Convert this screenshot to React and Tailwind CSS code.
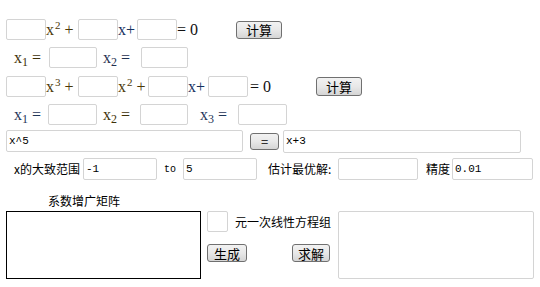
import React from 'react';

const serif = { fontFamily: '"Liberation Serif", "DejaVu Serif", serif' };

function Box({ w = 40, h = 21, value = '', className = '' }) {
  return (
    <input
      readOnly
      value={value}
      className={`shrink-0 rounded-[2px] border border-[#d4d4d4] bg-white px-[2px] text-[11px] text-black outline-none font-['Liberation_Mono',monospace] ${className}`}
      style={{ width: w, height: h }}
    />
  );
}

function Btn({ children, w = 46, h = 18, className = '' }) {
  return (
    <button
      className={`shrink-0 rounded-[3px] border border-[#707070] bg-gradient-to-b from-[#f2f2f2] via-[#e8e8e8] to-[#d5d5d5] text-[13px] leading-none text-black font-['Noto_Sans_CJK_SC',sans-serif] ${className}`}
      style={{ width: w, height: h }}
    >
      {children}
    </button>
  );
}

function Term({ children, w, color = 'text-[#111]' }) {
  return (
    <span className={`shrink-0 text-[16px] leading-none ${color}`} style={{ ...serif, width: w }}>
      {children}
    </span>
  );
}

export default function App() {
  return (
    <div className="w-[540px] h-[287px] bg-white text-black overflow-hidden">
      {/* quadratic */}
      <div className="flex items-center h-[21px] mt-[19px] pl-[6px]">
        <Box />
        <Term w={32} color="text-[#4a3706]">
          x<sup className="text-[11px] ml-[1px]">2</sup> +
        </Term>
        <Box />
        <Term w={19} color="text-[#15305e]">x+</Term>
        <Box />
        <Term w={59}>= 0</Term>
        <Btn>计算</Btn>
      </div>
      <div className="flex items-center h-[21px] mt-[7px] pl-[14px]">
        <Term w={35} color="text-[#3e3108]">
          x<sub className="text-[12px]">1</sub> =
        </Term>
        <Box w={48} />
        <Term w={44} color="text-[#1f3050]">
          <span className="ml-[6px]">x<sub className="text-[12px]">2</sub> =</span>
        </Term>
        <Box w={47} />
      </div>

      {/* cubic */}
      <div className="flex items-center h-[21px] mt-[8px] pl-[6px]">
        <Box />
        <Term w={32} color="text-[#4a3706]">
          x<sup className="text-[11px] ml-[1px]">3</sup> +
        </Term>
        <Box />
        <Term w={30} color="text-[#4a3706]">
          x<sup className="text-[11px] ml-[1px]">2</sup> +
        </Term>
        <Box />
        <Term w={20} color="text-[#15305e]">x+</Term>
        <Box />
        <Term w={68}>
          <span className="ml-[2px]">= 0</span>
        </Term>
        <Btn h={19}>计算</Btn>
      </div>
      <div className="flex items-center h-[21px] mt-[7px] pl-[14px]">
        <Term w={34} color="text-[#1f3558]">
          x<sub className="text-[12px]">1</sub> =
        </Term>
        <Box w={49} />
        <Term w={43} color="text-[#3e3108]">
          <span className="ml-[6px]">x<sub className="text-[12px]">2</sub> =</span>
        </Term>
        <Box w={48} />
        <Term w={50} color="text-[#1f3558]">
          <span className="ml-[12px]">x<sub className="text-[12px]">3</sub> =</span>
        </Term>
        <Box w={49} />
      </div>

      {/* equation solver */}
      <div className="flex items-center h-[22px] mt-[5px] pl-[6px]">
        <Box w={237} h={22} value="x^5" />
        <Btn w={29} h={17} className="ml-[7px]">=</Btn>
        <Box w={238} h={23} value="x+3" className="ml-[4px]" />
      </div>
      <div className="flex items-center h-[22px] mt-[6px] pl-[14px] text-[12px] font-['Noto_Sans_CJK_SC',sans-serif]">
        <span className="w-[69px] shrink-0">x的大致范围</span>
        <Box w={74} h={22} value="-1" />
        <span className="w-[26px] shrink-0 text-center text-[10px] font-['Liberation_Mono',monospace]">to</span>
        <Box w={74} h={22} value="5" />
        <span className="w-[81px] shrink-0 pl-[11px]">估计最优解:</span>
        <Box w={80} h={22} />
        <span className="w-[34px] shrink-0 pl-[8px]">精度</span>
        <Box w={81} h={22} value="0.01" />
      </div>

      {/* linear system */}
      <div className="flex mt-[14px] pl-[6px] font-['Noto_Sans_CJK_SC',sans-serif] text-[12px]">
        <div className="flex flex-col w-[201px] shrink-0">
          <span className="pl-[42px] h-[17px] leading-[14px]">系数增广矩阵</span>
          <textarea readOnly className="w-[195px] h-[68px] border border-black bg-white resize-none outline-none" />
        </div>
        <div className="flex flex-col w-[131px] shrink-0 pt-[17px]">
          <div className="flex items-center h-[21px]">
            <div className="w-[21px] h-[21px] rounded-[2px] border border-[#d4d4d4] bg-white" />
            <span className="ml-[7px]">元一次线性方程组</span>
          </div>
          <div className="flex items-center justify-between mt-[12px] pr-[8px]">
            <Btn w={40} h={18}>生成</Btn>
            <Btn w={38} h={18}>求解</Btn>
          </div>
        </div>
        <div className="pt-[17px]">
          <textarea readOnly className="w-[196px] h-[68px] rounded-[2px] border border-[#d4d4d4] bg-white resize-none outline-none" />
        </div>
      </div>
    </div>
  );
}
